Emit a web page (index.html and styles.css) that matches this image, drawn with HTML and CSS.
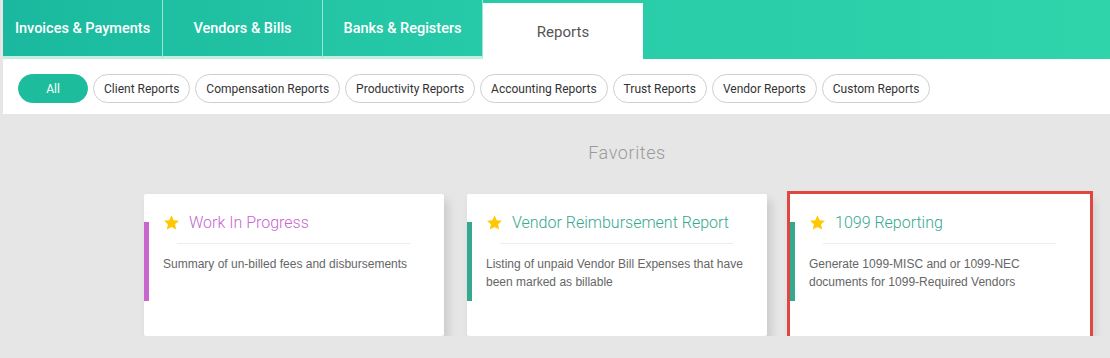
FILE: index.html
```html
<!DOCTYPE html>
<html lang="en">
<head>
  <meta charset="UTF-8" />
  <title>Reports</title>
  <link rel="stylesheet" href="styles.css">
</head>
<body>

  <!-- Top Tabs -->
  <nav class="tabs">
    <a class="tab">Invoices &amp; Payments</a>
    <a class="tab">Vendors &amp; Bills</a>
    <a class="tab">Banks &amp; Registers</a>
    <a class="tab active">Reports</a>
    <div class="tabs-rest"></div>
  </nav>

  <!-- Filter Pills -->
  <div class="filters">
    <button class="pill selected">All</button>
    <button class="pill">Client Reports</button>
    <button class="pill">Compensation Reports</button>
    <button class="pill">Productivity Reports</button>
    <button class="pill">Accounting Reports</button>
    <button class="pill">Trust Reports</button>
    <button class="pill">Vendor Reports</button>
    <button class="pill">Custom Reports</button>
  </div>

  <!-- Favorites -->
  <main class="favorites">
    <h2>Favorites</h2>
    <div class="cards">
      <div class="card purple">
        <div class="card-title">
          <svg class="star" viewBox="0 0 24 24"><path d="M12 1.8l3.1 6.9 7.5.8-5.6 5.1 1.6 7.4L12 18.2 5.4 22l1.6-7.4-5.6-5.1 7.5-.8z"/></svg>
          <span>Work In Progress</span>
        </div>
        <hr>
        <p>Summary of un-billed fees and disbursements</p>
      </div>
      <div class="card">
        <div class="card-title">
          <svg class="star" viewBox="0 0 24 24"><path d="M12 1.8l3.1 6.9 7.5.8-5.6 5.1 1.6 7.4L12 18.2 5.4 22l1.6-7.4-5.6-5.1 7.5-.8z"/></svg>
          <span>Vendor Reimbursement Report</span>
        </div>
        <hr>
        <p>Listing of unpaid Vendor Bill Expenses that have been marked as billable</p>
      </div>
      <div class="card highlighted">
        <div class="card-title">
          <svg class="star" viewBox="0 0 24 24"><path d="M12 1.8l3.1 6.9 7.5.8-5.6 5.1 1.6 7.4L12 18.2 5.4 22l1.6-7.4-5.6-5.1 7.5-.8z"/></svg>
          <span>1099 Reporting</span>
        </div>
        <hr>
        <p>Generate 1099-MISC and or 1099-NEC documents for 1099-Required Vendors</p>
      </div>
    </div>
  </main>

</body>
</html>
```

FILE: styles.css
```css
* {
  box-sizing: border-box;
  margin: 0;
  padding: 0;
}

html, body {
  font-family: Roboto, 'Liberation Sans', sans-serif;
  background: #e6e6e6;
}

body {
  padding-left: 3px;
}

/* Tabs */
.tabs {
  display: flex;
  height: 59px;
  background: linear-gradient(90deg, #1ab99f 0%, #27cba8 45%, #2fd4ab 100%);
}

.tab {
  width: 160px;
  height: 59px;
  display: flex;
  align-items: center;
  justify-content: center;
  padding-top: 1px;
  color: #fff;
  font-size: 14.5px;
  font-weight: 500;
  border-right: 1px solid rgba(255, 255, 255, 0.55);
  border-bottom: 3px solid #c3eee2;
}

.tab.active {
  margin-top: 3px;
  height: 56px;
  background: #fff;
  color: #555;
  font-size: 15px;
  font-weight: 400;
  border: none;
  padding-top: 2px;
}

.tabs-rest {
  flex: 1;
}

/* Filters */
.filters {
  display: flex;
  align-items: flex-start;
  gap: 5px;
  height: 55px;
  padding: 15px 15px 0;
  background: #fff;
}

.pill {
  height: 29px;
  padding: 0 10px;
  font-family: Roboto, sans-serif;
  font-size: 12px;
  color: #333;
  background: #fff;
  border: 1px solid #cfcfcf;
  border-radius: 999px;
}

.pill.selected {
  width: 70px;
  background: #1dbc9c;
  border-color: #1dbc9c;
  color: #fff;
}

/* Favorites */
.favorites {
  padding-left: 141px;
}

.favorites h2 {
  padding-top: 27px;
  text-align: center;
  font-size: 18px;
  line-height: 24px;
  font-weight: 300;
  color: #9a9a9a;
  letter-spacing: 0.6px;
}

.cards {
  display: flex;
  gap: 23px;
  margin-top: 29px;
}

.card {
  position: relative;
  width: 300px;
  height: 142px;
  padding: 17px 19px 0;
  background: #fff;
  border-radius: 2px;
  box-shadow: 4px 6px 10px rgba(0, 0, 0, 0.13);
}

.card::before {
  content: "";
  position: absolute;
  left: 0;
  top: 28px;
  width: 5px;
  height: 79px;
  background: #35a98f;
}

.card.purple::before {
  background: #c965cf;
}

.card.highlighted {
  border-radius: 0;
  outline: 3px solid #e14741;
}

.card-title {
  display: flex;
  align-items: center;
  height: 22px;
  font-size: 16px;
  font-weight: 300;
  color: #35a890;
}

.card.purple .card-title {
  color: #c766cf;
}

.star {
  width: 17px;
  height: 17px;
  margin-right: 9px;
  fill: #ffc800;
}

.card hr {
  margin: 10px 15px 0 14px;
  border: none;
  border-top: 1px solid #ececec;
}

.card p {
  margin-top: 11px;
  font-family: 'Liberation Sans', Arial, sans-serif;
  font-size: 12px;
  line-height: 18px;
  color: #666;
}
```
